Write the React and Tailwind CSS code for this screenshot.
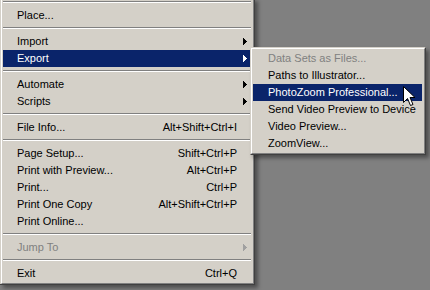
import React from 'react';

const MAIN_ITEMS = [
  { label: 'Place...' },
  { sep: true },
  { label: 'Import', sub: true },
  { label: 'Export', sub: true, active: true },
  { sep: true },
  { label: 'Automate', sub: true },
  { label: 'Scripts', sub: true },
  { sep: true },
  { label: 'File Info...', shortcut: 'Alt+Shift+Ctrl+I' },
  { sep: true },
  { label: 'Page Setup...', shortcut: 'Shift+Ctrl+P' },
  { label: 'Print with Preview...', shortcut: 'Alt+Ctrl+P' },
  { label: 'Print...', shortcut: 'Ctrl+P' },
  { label: 'Print One Copy', shortcut: 'Alt+Shift+Ctrl+P' },
  { label: 'Print Online...' },
  { sep: true },
  { label: 'Jump To', sub: true, disabled: true },
  { sep: true },
  { label: 'Exit', shortcut: 'Ctrl+Q' },
];

const EXPORT_ITEMS = [
  { label: 'Data Sets as Files...', disabled: true },
  { label: 'Paths to Illustrator...' },
  { label: 'PhotoZoom Professional...', active: true },
  { label: 'Send Video Preview to Device' },
  { label: 'Video Preview...' },
  { label: 'ZoomView...' },
];

const font = { fontFamily: '"Liberation Sans", Tahoma, Arial, sans-serif' };

function SubArrow({ color }) {
  return (
    <svg width="4" height="7" viewBox="0 0 4 7" shapeRendering="crispEdges" className="block">
      <path d="M0 0h1v7H0z M1 1h1v5H1z M2 2h1v3H2z M3 3h1v1H3z" fill={color} />
    </svg>
  );
}

function Separator() {
  return (
    <div className="h-[9px] pt-[3px]">
      <div className="h-px bg-[#808080]" />
      <div className="h-px bg-white" />
    </div>
  );
}

function MenuRow({ item, padLeft = 'pl-[14px]' }) {
  const textColor = item.active ? 'text-white' : item.disabled ? 'text-[#808080]' : 'text-black';
  const arrowColor = item.active ? '#ffffff' : item.disabled ? '#a0a0a0' : '#000000';
  return (
    <div
      className={`h-[17px] flex items-center whitespace-nowrap text-[11px] leading-none ${padLeft} ${textColor} ${item.active ? 'bg-[#0a246a]' : ''}`}
    >
      <span className="flex-1">{item.label}</span>
      {item.shortcut && <span>{item.shortcut}</span>}
      <div className="w-[14px] pl-[6px] flex items-center shrink-0">
        {item.sub && <SubArrow color={arrowColor} />}
      </div>
    </div>
  );
}

function MenuFrame({ className, children }) {
  return (
    <div
      className={`bg-[#d4d0c8] border-l border-t border-l-[#d4d0c8] border-t-[#d4d0c8] border-r border-b border-r-[#404040] border-b-[#404040] shadow-[3px_3px_4px_rgba(0,0,0,0.4)] ${className}`}
    >
      <div className="border-l border-t border-l-white border-t-white border-r border-b border-r-[#808080] border-b-[#808080] pl-px pr-[2px] pt-px pb-px">
        {children}
      </div>
    </div>
  );
}

function Cursor() {
  return (
    <svg width="13" height="21" viewBox="0 0 13 21" className="absolute left-[403px] top-[86px]">
      <path
        d="M0.5 0.5 V16.5 L4.5 12.5 L7.5 19.5 L10 18.5 L7 11.5 H12 Z"
        fill="#ffffff"
        stroke="#000000"
        strokeWidth="1"
        strokeLinejoin="miter"
      />
    </svg>
  );
}

export default function App() {
  return (
    <div className="relative w-[430px] h-[290px] bg-[#808080] overflow-hidden" style={font}>
      {/* main File menu, top cut off */}
      <div className="w-[255px] bg-[#d4d0c8] border-r border-b border-r-[#404040] border-b-[#404040] shadow-[3px_3px_4px_rgba(0,0,0,0.4)]">
        <div className="border-l border-l-[#d4d0c8]">
          <div className="border-l border-l-white border-r border-b border-r-[#808080] border-b-[#808080] pl-px pr-[2px] pb-px">
            <div className="-mt-[2px]">
              <Separator />
              {MAIN_ITEMS.map((item, i) =>
                item.sep ? <Separator key={i} /> : <MenuRow key={i} item={item} />
              )}
            </div>
          </div>
        </div>
      </div>

      {/* Export submenu */}
      <MenuFrame className="absolute left-[250px] top-[47px] w-[176px]">
        {EXPORT_ITEMS.map((item, i) => (
          <MenuRow key={i} item={item} padLeft="pl-[15px]" />
        ))}
      </MenuFrame>

      <Cursor />
    </div>
  );
}
